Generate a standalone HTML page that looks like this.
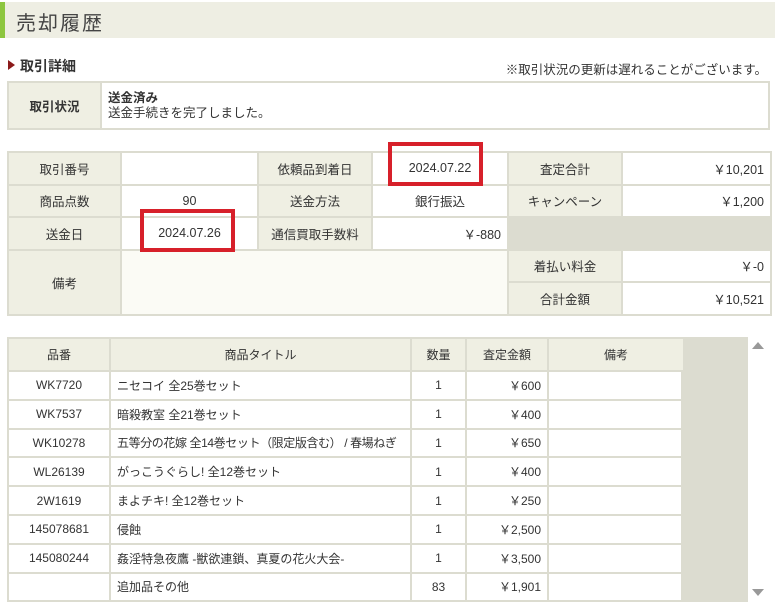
<!DOCTYPE html>
<html><head><meta charset="utf-8"><style>
*{margin:0;padding:0;box-sizing:border-box}
body{width:775px;height:611px;background:#fff;font-family:"Liberation Sans","Noto Sans CJK JP",sans-serif;font-size:12.5px;color:#333;position:relative;overflow:hidden}
.hdr{position:absolute;left:0;top:2px;width:775px;height:36px;background:#eeeee3;border-left:5px solid #8dc63f}
.hdr span{position:absolute;left:11px;top:5px;font-size:20px;letter-spacing:2px;color:#444}
.sec{position:absolute;left:8px;top:56px;font-size:14px;font-weight:bold;color:#333}
.sec i{display:inline-block;width:0;height:0;border-left:7px solid #8b1a1a;border-top:5px solid transparent;border-bottom:5px solid transparent;margin-right:5px;vertical-align:1px}
.note{position:absolute;right:8px;top:59px;font-size:12.5px}
table{position:absolute;border-collapse:collapse;table-layout:fixed}
td{border:2px solid #dcdcd0;text-align:center;padding:0 6px;white-space:nowrap;overflow:hidden}
.l{background:#efefe3}
.r{text-align:right}
.lf{text-align:left}
.g{background:#dcdcd0}
.red{position:absolute;border:4px solid #d7202a}
.t3 td{font-size:12px}
</style></head><body>
<div class="hdr"><span>売却履歴</span></div>
<div class="sec"><i></i>取引詳細</div>
<div class="note">※取引状況の更新は遅れることがございます。</div>
<table style="left:7px;top:81px;width:763px">
<col style="width:93px"><col>
<tr style="height:47px"><td class="l" style="font-weight:bold">取引状況</td><td class="lf" style="line-height:15px"><b>送金済み</b><br>送金手続きを完了しました。</td></tr>
</table>
<table style="left:7px;top:151px;width:763px">
<col style="width:113px"><col style="width:137px"><col style="width:114px"><col style="width:136px"><col style="width:114px"><col style="width:149px">
<tr style="height:32.5px"><td class="l">取引番号</td><td></td><td class="l">依頼品到着日</td><td>2024.07.22</td><td class="l">査定合計</td><td class="r">￥10,201</td></tr>
<tr style="height:32.5px"><td class="l">商品点数</td><td>90</td><td class="l">送金方法</td><td>銀行振込</td><td class="l">キャンペーン</td><td class="r">￥1,200</td></tr>
<tr style="height:32.5px"><td class="l">送金日</td><td>2024.07.26</td><td class="l">通信買取手数料</td><td class="r">￥-880</td><td class="g" colspan="2"></td></tr>
<tr style="height:32.5px"><td class="l" rowspan="2">備考</td><td rowspan="2" colspan="3" style="background:#fbfbf5"></td><td class="l">着払い料金</td><td class="r">￥-0</td></tr>
<tr style="height:32.5px"><td class="l">合計金額</td><td class="r">￥10,521</td></tr>
</table>
<div class="red" style="left:388px;top:142px;width:95px;height:44px"></div>
<div class="red" style="left:140px;top:209px;width:95px;height:43px"></div>
<div style="position:absolute;left:681px;top:337px;width:67px;height:265px;background:#dcdcd0"></div>
<table class="t3" style="left:7px;top:337px;width:676px">
<col style="width:102px"><col style="width:301px"><col style="width:55px"><col style="width:82px"><col style="width:136px">
<tr style="height:33px" class="l"><td>品番</td><td>商品タイトル</td><td>数量</td><td>査定金額</td><td>備考</td></tr>
<tr style="height:28.8px"><td>WK7720</td><td class="lf">ニセコイ 全25巻セット</td><td>1</td><td class="r">￥600</td><td></td></tr>
<tr style="height:28.8px"><td>WK7537</td><td class="lf">暗殺教室 全21巻セット</td><td>1</td><td class="r">￥400</td><td></td></tr>
<tr style="height:28.8px"><td>WK10278</td><td class="lf" style="letter-spacing:-0.4px">五等分の花嫁 全14巻セット（限定版含む） / 春場ねぎ</td><td>1</td><td class="r">￥650</td><td></td></tr>
<tr style="height:28.8px"><td>WL26139</td><td class="lf">がっこうぐらし! 全12巻セット</td><td>1</td><td class="r">￥400</td><td></td></tr>
<tr style="height:28.8px"><td>2W1619</td><td class="lf">まよチキ! 全12巻セット</td><td>1</td><td class="r">￥250</td><td></td></tr>
<tr style="height:28.8px"><td>145078681</td><td class="lf">侵蝕</td><td>1</td><td class="r">￥2,500</td><td></td></tr>
<tr style="height:28.8px"><td>145080244</td><td class="lf">姦淫特急夜鷹 -獣欲連鎖、真夏の花火大会-</td><td>1</td><td class="r">￥3,500</td><td></td></tr>
<tr style="height:28.8px"><td></td><td class="lf">追加品その他</td><td>83</td><td class="r">￥1,901</td><td></td></tr>
</table>
<div style="position:absolute;left:752px;top:342px;width:0;height:0;border-left:6px solid transparent;border-right:6px solid transparent;border-bottom:7px solid #999"></div>
<div style="position:absolute;left:752px;top:589px;width:0;height:0;border-left:6px solid transparent;border-right:6px solid transparent;border-top:7px solid #999"></div>
</body></html>
